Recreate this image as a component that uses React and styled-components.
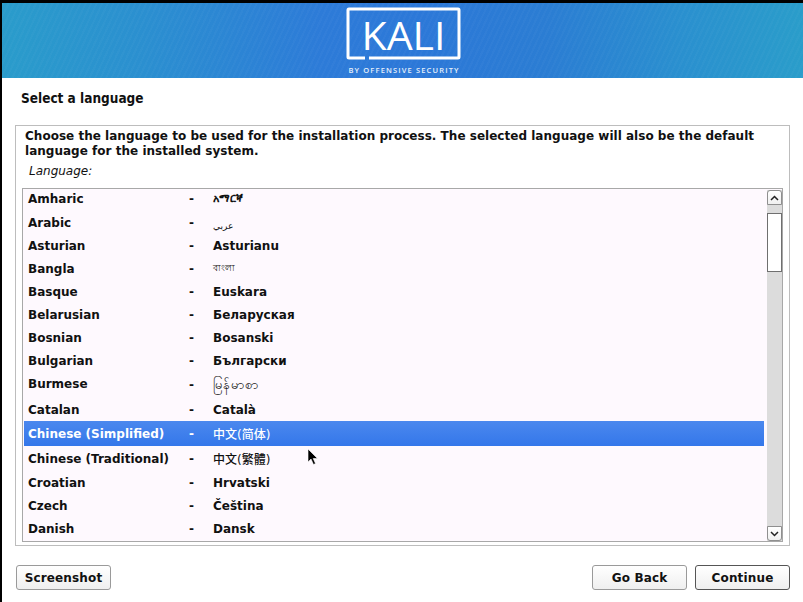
import React from "react";
import styled, { createGlobalStyle } from "styled-components";

const languages = [
  { name: "Amharic", native: "አማርኛ", height: 23, size: 11 },
  { name: "Arabic", native: "عربي", height: 25, size: 9, weight: 400, drop: 6 },
  { name: "Asturian", native: "Asturianu", height: 22 },
  { name: "Bangla", native: "বাংলা", height: 23, size: 9, weight: 400 },
  { name: "Basque", native: "Euskara", height: 23 },
  { name: "Belarusian", native: "Беларуская", height: 23 },
  { name: "Bosnian", native: "Bosanski", height: 23 },
  { name: "Bulgarian", native: "Български", height: 23 },
  { name: "Burmese", native: "မြန်မာစာ", height: 26, size: 13, weight: 400, lift: 3 },
  { name: "Catalan", native: "Català", height: 23 },
  { name: "Chinese (Simplified)", native: "中文(简体)", height: 25, selected: true, weight: 500 },
  { name: "Chinese (Traditional)", native: "中文(繁體)", height: 25, weight: 500 },
  { name: "Croatian", native: "Hrvatski", height: 23 },
  { name: "Czech", native: "Čeština", height: 23 },
  { name: "Danish", native: "Dansk", height: 23 },
];

const GlobalStyle = createGlobalStyle`
  html, body {
    margin: 0;
    padding: 0;
    background: #000;
  }
`;

const Screen = styled.div`
  position: relative;
  width: 801px;
  height: 599px;
  margin-left: 2px;
  padding-top: 3px;
  display: flex;
  flex-direction: column;
  background: #000;
  font-family: "DejaVu Sans", sans-serif;
  font-size: 12px;
  color: #111;
  overflow: hidden;
`;

const Banner = styled.header`
  flex: 0 0 75px;
  display: flex;
  justify-content: center;
  background:
    repeating-linear-gradient(115deg, rgba(255,255,255,0.025) 0 2px, rgba(255,255,255,0) 2px 5px),
    linear-gradient(90deg, #2a9ccb 0%, #2b8fd0 18%, #2d7bd8 40%, #2c78d8 52%, #2b7dd3 68%, #2a90cf 85%, #2a9dca 100%);
`;

const Logo = styled.svg`
  display: block;
  width: 116px;
  height: 75px;
  margin-left: 3px;
`;

const Body = styled.main`
  flex: 1;
  display: flex;
  flex-direction: column;
  background: #fff;
  padding: 0 13px 0 13px;
`;

const PageTitle = styled.h1`
  margin: 12px 0 0 6px;
  height: 16px;
  font-family: "DejaVu Sans Condensed", "DejaVu Sans", sans-serif;
  font-size: 13.5px;
  line-height: 16px;
  font-weight: 700;
`;

const Panel = styled.section`
  box-sizing: border-box;
  margin-top: 19px;
  height: 421px;
  border: 1px solid #bdbdbd;
  padding: 3px 6px 3px 6px;
  display: flex;
  flex-direction: column;
`;

const Intro = styled.p`
  margin: 0 0 0 3px;
  font-weight: 700;
  line-height: 15px;
  letter-spacing: 0.02px;
`;

const FieldLabel = styled.div`
  margin: 5px 0 0 7px;
  height: 24px;
  line-height: 15px;
  font-style: italic;
`;

const ListBox = styled.div`
  flex: 1;
  min-height: 0;
  border: 1px solid #a8a8a8;
  background: #fef9fe;
  display: flex;
  padding: 0 0 0 1px;
  overflow: hidden;
`;

const Rows = styled.ul`
  flex: 1;
  margin: -2px 0 0;
  padding: 0;
  list-style: none;
`;

const Row = styled.li`
  display: grid;
  grid-template-columns: 161px 24px 1fr;
  align-items: center;
  height: ${(p) => p.$height}px;
  padding-left: 4px;
  font-weight: 700;
  color: ${(p) => (p.$selected ? "#fff" : "#111")};
  background: ${(p) => (p.$selected ? "linear-gradient(180deg, #4b88ee, #3477ea)" : "transparent")};
`;

const Name = styled.span`
  padding-bottom: ${(p) => p.$lift || 0}px;
`;

const Native = styled.span`
  font-family: "DejaVu Sans", "Noto Sans CJK SC", sans-serif;
  font-size: ${(p) => p.$size || 12}px;
  font-weight: ${(p) => p.$weight || 700};
  padding-top: ${(p) => p.$drop || 0}px;
`;

const ScrollTrack = styled.div`
  flex: 0 0 15px;
  margin: 1px 0 0 3px;
  display: flex;
  flex-direction: column;
  background: #dcdcdc;
`;

const ScrollButton = styled.div`
  box-sizing: border-box;
  height: 15px;
  background: linear-gradient(180deg, #ffffff, #f0f0f0);
  border: 1px solid #8f8f8f;
  border-radius: ${(p) => (p.$up ? "3px 3px 0 0" : "0 0 3px 3px")};
  display: flex;
  align-items: center;
  justify-content: center;
`;

const ScrollThumb = styled.div`
  box-sizing: border-box;
  height: 59px;
  margin-top: 8px;
  background: #fff;
  border: 1px solid #6f6f6f;
`;

const ScrollSpacer = styled.div`
  flex: 1;
`;

const Footer = styled.footer`
  display: flex;
  align-items: center;
  justify-content: space-between;
  margin-top: 19px;
  padding-left: 1px;
`;

const ButtonGroup = styled.div`
  display: flex;
  gap: 8px;
`;

const Button = styled.button`
  box-sizing: border-box;
  width: 95px;
  height: 25px;
  padding: 0;
  font-family: inherit;
  font-size: 12px;
  font-weight: 700;
  letter-spacing: 0.15px;
  color: #111;
  background: linear-gradient(180deg, #ffffff, #efefef);
  border: 1px solid ${(p) => (p.$focused ? "#555" : "#9a9a9a")};
  border-radius: 3px;
`;

const Pointer = styled.svg`
  position: absolute;
  left: 305px;
  top: 448px;
  width: 12px;
  height: 18px;
`;

const Chevron = ({ up }) => (
  <svg width="9" height="6" viewBox="0 0 9 6">
    <path d={up ? "M1 5 L4.5 1.5 L8 5" : "M1 1 L4.5 4.5 L8 1"} fill="none" stroke="#222" strokeWidth="1.5" />
  </svg>
);

export default function App() {
  return (
    <Screen>
      <GlobalStyle />
      <Banner>
        <Logo viewBox="0 0 116 75">
          <path
            d="M19 55 H3 a1 1 0 0 1 -1 -1 V7 a1 1 0 0 1 1 -1 H112 a1 1 0 0 1 1 1 V54 a1 1 0 0 1 -1 1 H23"
            fill="none"
            stroke="#fff"
            strokeWidth="3"
          />
          <text x="57.5" y="47" textAnchor="middle" fill="#fff" fontFamily="Open Sans" fontSize="38" fontWeight="400" textLength="84" lengthAdjust="spacingAndGlyphs">
            KALI
          </text>
          <text x="57.5" y="70" textAnchor="middle" fill="#e6f0fb" fontFamily="Open Sans" fontSize="7.5" fontWeight="600" textLength="110" lengthAdjust="spacing">
            BY OFFENSIVE SECURITY
          </text>
        </Logo>
      </Banner>
      <Body>
        <PageTitle>Select a language</PageTitle>
        <Panel>
          <Intro>
            Choose the language to be used for the installation process. The selected language will also be the default language for the installed system.
          </Intro>
          <FieldLabel>Language:</FieldLabel>
          <ListBox>
            <Rows>
              {languages.map((l) => (
                <Row key={l.name} $height={l.height} $selected={l.selected}>
                  <Name $lift={l.lift}>{l.name}</Name>
                  <span>-</span>
                  <Native $size={l.size} $weight={l.weight} $drop={l.drop}>{l.native}</Native>
                </Row>
              ))}
            </Rows>
            <ScrollTrack>
              <ScrollButton $up>
                <Chevron up />
              </ScrollButton>
              <ScrollThumb />
              <ScrollSpacer />
              <ScrollButton>
                <Chevron />
              </ScrollButton>
            </ScrollTrack>
          </ListBox>
        </Panel>
        <Footer>
          <Button>Screenshot</Button>
          <ButtonGroup>
            <Button>Go Back</Button>
            <Button $focused>Continue</Button>
          </ButtonGroup>
        </Footer>
      </Body>
      <Pointer viewBox="0 0 12 18">
        <path d="M1 1 V14 L4 11 L6.5 16.5 L8.5 15.5 L6.2 10.5 H10.5 Z" fill="#000" stroke="#fff" strokeWidth="0.6" />
      </Pointer>
    </Screen>
  );
}
